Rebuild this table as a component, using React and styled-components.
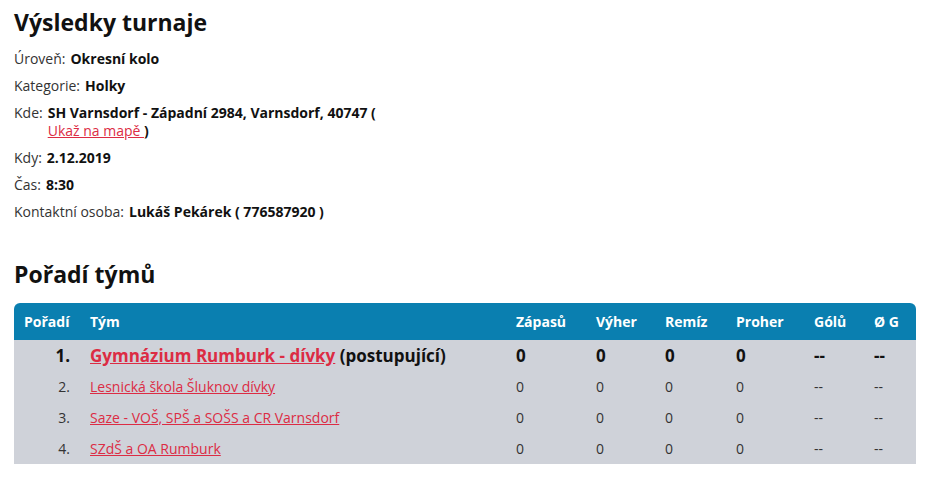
import React from "react";
import styled, { createGlobalStyle } from "styled-components";

const COLORS = {
  text: "#222",
  muted: "#333",
  link: "#dc2c44",
  header: "#0a7fb0",
  row: "#cfd2d9",
};

const GlobalStyle = createGlobalStyle`
  body {
    margin: 0;
    background: #fff;
    font-family: "Open Sans", "Noto Sans", sans-serif;
    color: ${COLORS.text};
  }
`;

const Page = styled.div`
  padding: 8px 11px 20px 14px;
`;

const Title = styled.h1`
  margin: 0 0 14px;
  font-size: 23px;
  line-height: 28px;
  font-weight: 700;
  color: #111;
`;

const SubTitle = styled(Title)`
  margin: 39px 0 15px;
`;

const InfoList = styled.div`
  display: flex;
  flex-direction: column;
  gap: 9px;
`;

const InfoRow = styled.div`
  display: flex;
  font-size: 14px;
  line-height: 18px;
  color: ${COLORS.muted};
`;

const Label = styled.span`
  margin-right: 5px;
  white-space: nowrap;
`;

const Value = styled.span`
  font-weight: 700;
  color: #111;
  max-width: 340px;
`;

const MapLink = styled.a`
  font-weight: 400;
  color: ${COLORS.link};
  text-decoration: underline;
  white-space: nowrap;
`;

const Table = styled.table`
  width: 100%;
  border-collapse: collapse;
  font-size: 14px;
`;

const Th = styled.th`
  background: ${COLORS.header};
  color: #fff;
  font-weight: 700;
  text-align: left;
  height: 37px;
  padding: 0 10px;
  width: ${(p) => p.$w || "auto"};
  &:first-child { border-top-left-radius: 6px; }
  &:last-child { border-top-right-radius: 6px; }
`;

const Tr = styled.tr`
  background: ${COLORS.row};
  font-size: ${(p) => (p.$lead ? "17px" : "14px")};
  font-weight: ${(p) => (p.$lead ? 700 : 400)};
  color: ${(p) => (p.$lead ? "#111" : COLORS.muted)};
`;

const Td = styled.td`
  height: 31px;
  padding: 0 10px;
  text-align: ${(p) => (p.$right ? "right" : "left")};
  white-space: nowrap;
`;

const TeamLink = styled.a`
  color: ${COLORS.link};
  text-decoration: underline;
`;

const columns = [
  { label: "Pořadí", w: "46px" },
  { label: "Tým", w: "406px" },
  { label: "Zápasů", w: "60px" },
  { label: "Výher", w: "49px" },
  { label: "Remíz", w: "51px" },
  { label: "Proher", w: "58px" },
  { label: "Gólů", w: "40px" },
  { label: "Ø G", w: "auto" },
];

const teams = [
  { name: "Gymnázium Rumburk - dívky", note: " (postupující)", lead: true },
  { name: "Lesnická škola Šluknov dívky" },
  { name: "Saze - VOŠ, SPŠ a SOŠS a CR Varnsdorf" },
  { name: "SZdŠ a OA Rumburk" },
];

export default function App() {
  return (
    <Page>
      <GlobalStyle />
      <Title>Výsledky turnaje</Title>
      <InfoList>
        <InfoRow>
          <Label>Úroveň:</Label>
          <Value>Okresní kolo</Value>
        </InfoRow>
        <InfoRow>
          <Label>Kategorie:</Label>
          <Value>Holky</Value>
        </InfoRow>
        <InfoRow>
          <Label>Kde:</Label>
          <Value>
            SH Varnsdorf - Západní 2984, Varnsdorf, 40747 ({" "}
            <MapLink href="#">Ukaž na mapě </MapLink>)
          </Value>
        </InfoRow>
        <InfoRow>
          <Label>Kdy:</Label>
          <Value>2.12.2019</Value>
        </InfoRow>
        <InfoRow>
          <Label>Čas:</Label>
          <Value>8:30</Value>
        </InfoRow>
        <InfoRow>
          <Label>Kontaktní osoba:</Label>
          <Value>Lukáš Pekárek ( 776587920 )</Value>
        </InfoRow>
      </InfoList>

      <SubTitle as="h2">Pořadí týmů</SubTitle>
      <Table>
        <thead>
          <tr>
            {columns.map((c) => (
              <Th key={c.label} $w={c.w}>
                {c.label}
              </Th>
            ))}
          </tr>
        </thead>
        <tbody>
          {teams.map((t, i) => (
            <Tr key={t.name} $lead={t.lead}>
              <Td $right>{i + 1}.</Td>
              <Td>
                <TeamLink href="#">{t.name}</TeamLink>
                {t.note}
              </Td>
              <Td>0</Td>
              <Td>0</Td>
              <Td>0</Td>
              <Td>0</Td>
              <Td>--</Td>
              <Td>--</Td>
            </Tr>
          ))}
        </tbody>
      </Table>
    </Page>
  );
}
